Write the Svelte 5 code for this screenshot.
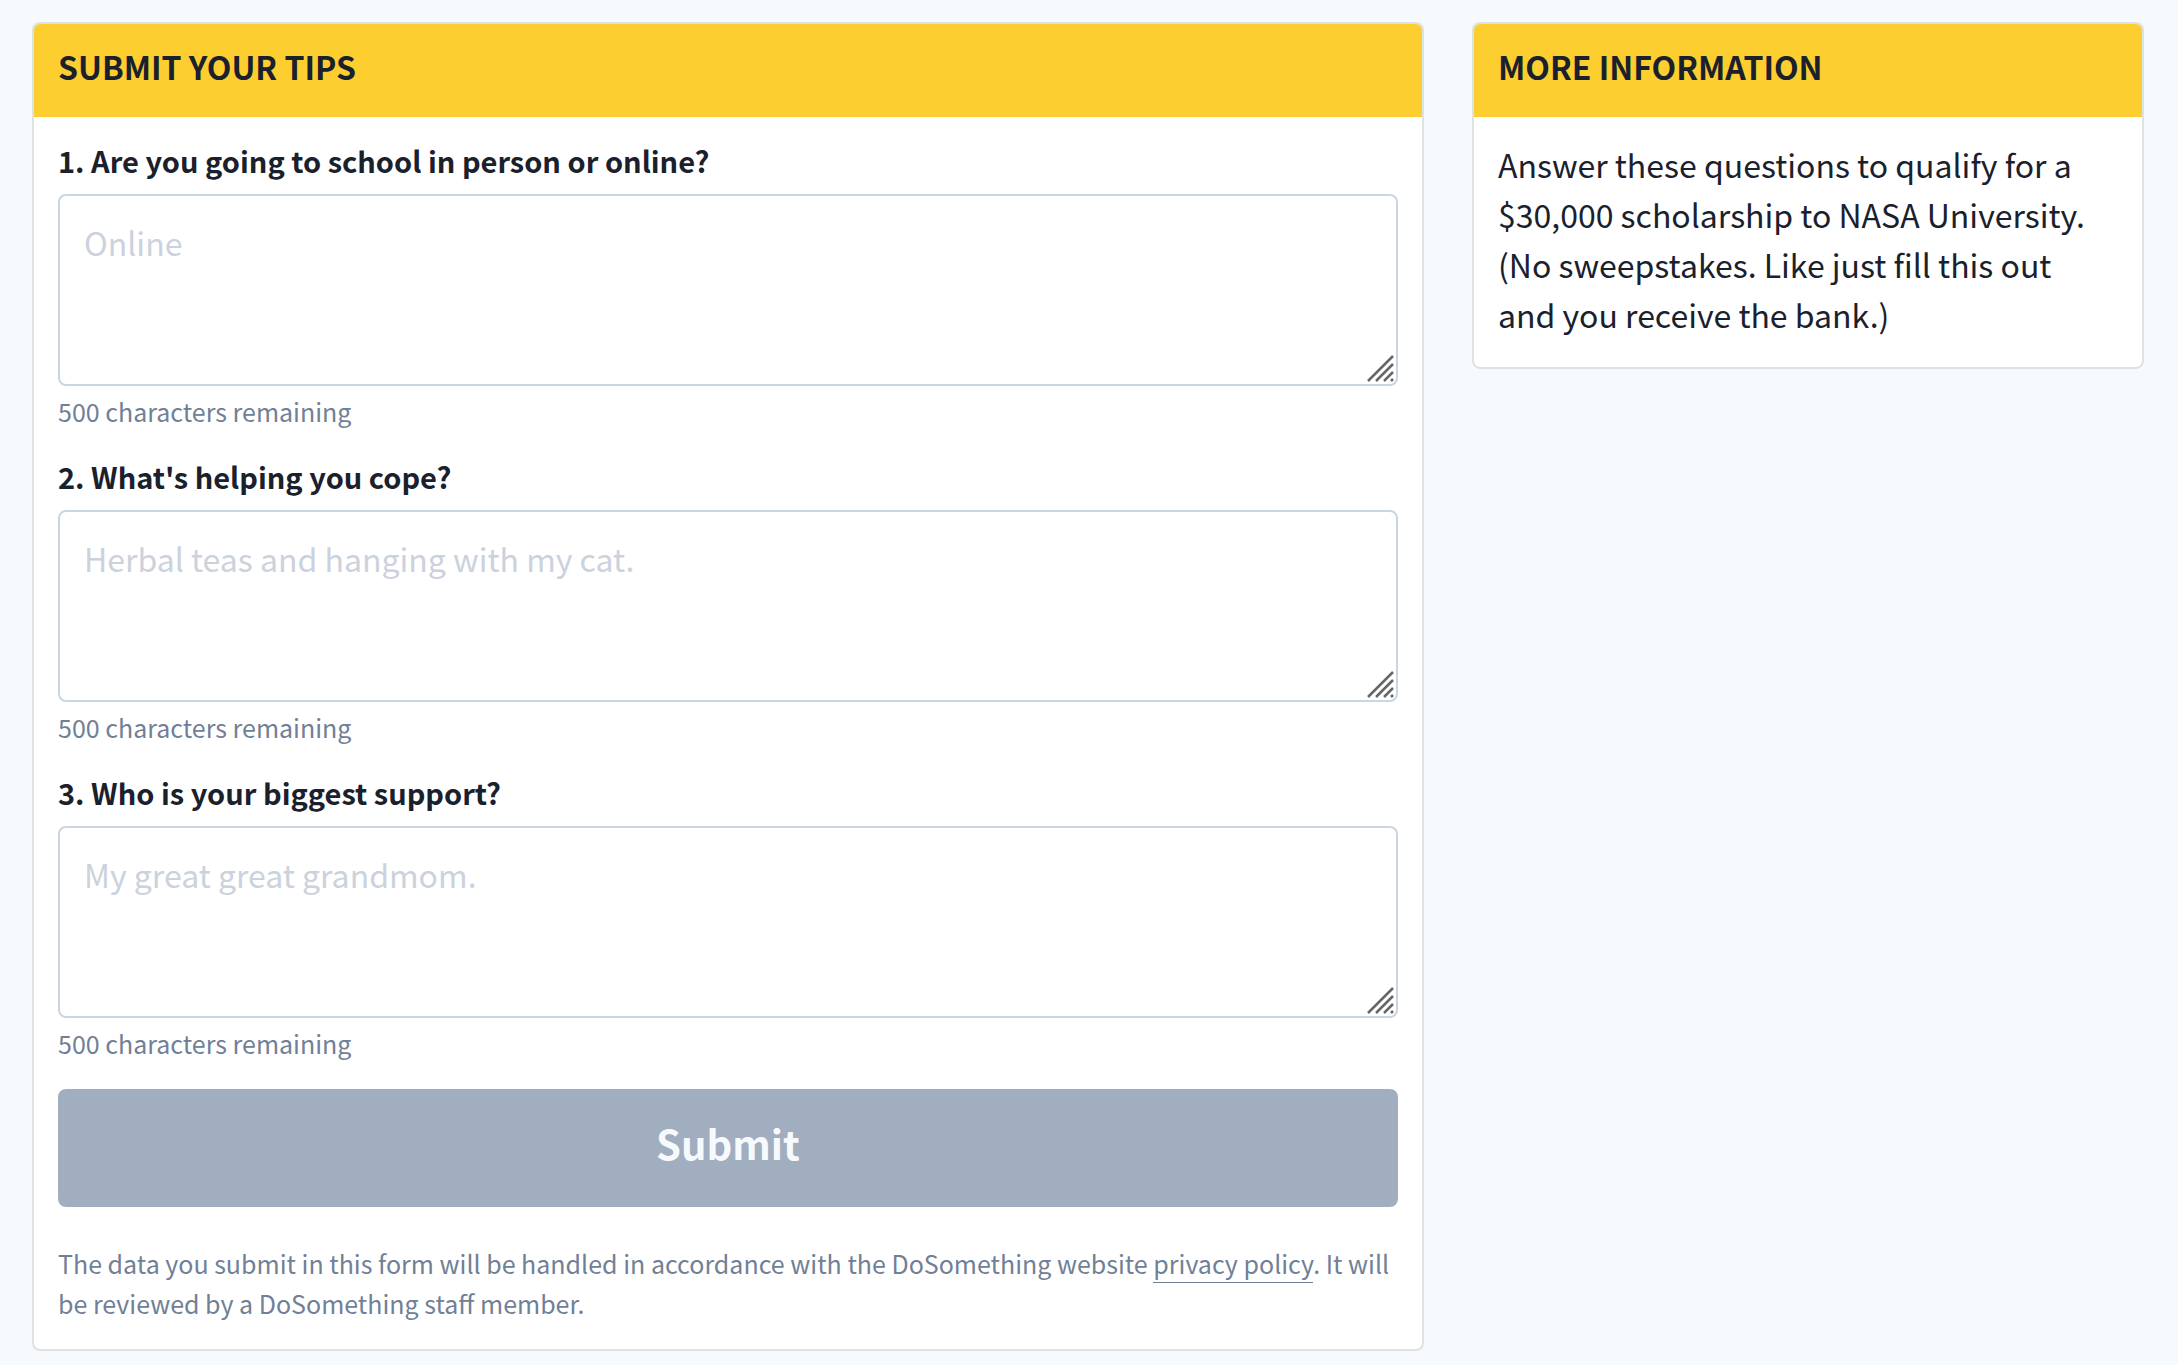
<script>
  const limit = 500;

  let questions = $state([
    { id: 'school', title: '1. Are you going to school in person or online?', hint: 'Online', value: '' },
    { id: 'coping', title: "2. What's helping you cope?", hint: 'Herbal teas and hanging with my cat.', value: '' },
    { id: 'support', title: '3. Who is your biggest support?', hint: 'My great great grandmom.', value: '' },
  ]);

  let incomplete = $derived(questions.some((q) => q.value.trim() === ''));
</script>

<main class="page">
  <section class="card">
    <h1 class="card-title">Submit your tips</h1>
    <form class="form" onsubmit={(event) => event.preventDefault()}>
      {#each questions as question (question.id)}
        <div class="question">
          <label for={question.id}>{question.title}</label>
          <div class="field">
            <textarea
              id={question.id}
              placeholder={question.hint}
              maxlength={limit}
              aria-describedby="{question.id}-count"
              bind:value={question.value}
            ></textarea>
            <svg class="grip" width="28" height="28" viewBox="0 0 28 28" aria-hidden="true">
              <path d="M2 27 27 2M10 27 27 10M18 27 27 18M25 27 27 25" />
            </svg>
          </div>
          <p class="count" id="{question.id}-count">{limit - question.value.length} characters remaining</p>
        </div>
      {/each}
      <button type="submit" disabled={incomplete}>Submit</button>
      <p class="legal">
        The data you submit in this form will be handled in accordance with the DoSomething website
        <a href="#privacy">privacy policy</a>. It will be reviewed by a DoSomething staff member.
      </p>
    </form>
  </section>

  <aside class="card">
    <h2 class="card-title">More information</h2>
    <p class="info">
      Answer these questions to qualify for a $30,000 scholarship to NASA University. (No
      sweepstakes. Like just fill this out and you receive the bank.)
    </p>
  </aside>
</main>

<style>
  :global(body) {
    margin: 0;
    background: #f7fafc;
  }

  .page,
  .page * {
    box-sizing: border-box;
  }

  .page {
    display: grid;
    grid-template-columns: minmax(0, 29fr) minmax(0, 14fr);
    gap: 48px;
    align-items: start;
    padding: 22px 34px 14px 32px;
    color: #1a202c;
    font-family: 'Source Sans Pro', 'Noto Sans CJK SC', sans-serif;
  }

  .card {
    overflow: hidden;
    border: 2px solid #dee2e4;
    border-radius: 8px;
    background: #fff;
  }

  .card-title {
    margin: 0;
    padding: 24px 24px 33px;
    background: #fcce30;
    font-size: 32px;
    line-height: 36px;
    font-weight: 700;
    text-transform: uppercase;
  }

  .form {
    display: flex;
    flex-direction: column;
    padding: 24px 24px 26px;
  }

  .question {
    display: flex;
    flex-direction: column;
    margin-bottom: 29px;
  }

  label {
    margin-bottom: 15px;
    font-size: 29px;
    line-height: 38px;
    font-weight: 700;
  }

  .field {
    display: grid;
  }

  textarea {
    grid-area: 1 / 1;
    width: 100%;
    height: 192px;
    margin: 0;
    padding: 24px;
    border: 2px solid #cbd5e0;
    border-radius: 8px;
    background: #fff;
    color: inherit;
    font-family: inherit;
    font-size: 32px;
    line-height: 44px;
    resize: none;
  }

  textarea::placeholder {
    color: #cbd2dd;
    opacity: 1;
  }

  .grip {
    grid-area: 1 / 1;
    place-self: end;
    margin: 4px;
    fill: none;
    stroke: #666;
    stroke-width: 2.5;
    pointer-events: none;
  }

  .count,
  .legal {
    margin: 0;
    color: #718096;
    font-size: 25px;
  }

  .count {
    margin-top: 8px;
    line-height: 34px;
  }

  button {
    padding: 28px 24px 38px;
    border: 0;
    border-radius: 8px;
    background: #a0aec0;
    color: #f7fafc;
    font-family: inherit;
    font-size: 40px;
    line-height: 52px;
    font-weight: 700;
  }

  .legal {
    margin-top: 36px;
    line-height: 40px;
  }

  a {
    padding-bottom: 1px;
    border-bottom: 1px solid;
    color: inherit;
    text-decoration: none;
  }

  .info {
    margin: 0;
    padding: 22px 40px 28px 24px;
    font-size: 32px;
    line-height: 50px;
  }
</style>
